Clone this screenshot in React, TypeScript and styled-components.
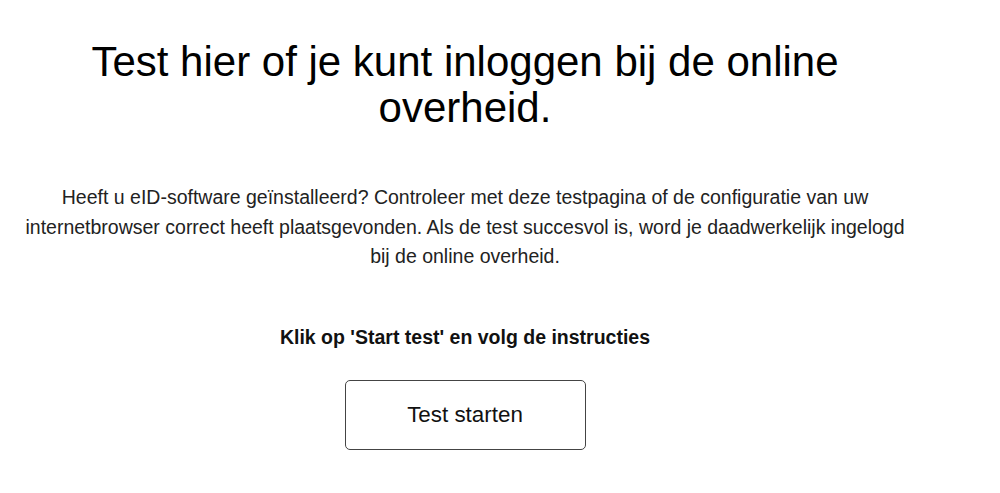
import React from "react";
import styled, { createGlobalStyle } from "styled-components";

const Global = createGlobalStyle`
  body {
    margin: 8px;
    background: #ffffff;
    font-family: "Liberation Sans", Arial, sans-serif;
    color: #000;
  }
`;

const Page = styled.main`
  width: 914px;
  display: flex;
  flex-direction: column;
  align-items: center;
  text-align: center;
  padding-top: 31px;
`;

const Title = styled.h1`
  margin: 0;
  font-size: 42px;
  line-height: 46px;
  font-weight: 400;
  color: #000;
  width: 800px;
`;

const Intro = styled.p`
  margin: 52px 0 0;
  max-width: 892px;
  font-size: 19.5px;
  line-height: 29.5px;
  color: #222;
`;

const Instruction = styled.p`
  margin: 54px 0 0;
  font-size: 19.5px;
  font-weight: 700;
  color: #111;
`;

const StartButton = styled.button`
  margin-top: 31px;
  width: 241px;
  height: 70px;
  background: #fff;
  border: 1px solid #444;
  border-radius: 5px;
  font-family: "Liberation Sans", Arial, sans-serif;
  font-size: 22.4px;
  color: #111;
  cursor: pointer;
`;

export default function App() {
  return (
    <>
      <Global />
      <Page>
        <Title>Test hier of je kunt inloggen bij de online overheid.</Title>
        <Intro>
          Heeft u eID-software geïnstalleerd? Controleer met deze testpagina of de configuratie van uw
          internetbrowser correct heeft plaatsgevonden. Als de test succesvol is, word je daadwerkelijk
          ingelogd bij de online overheid.
        </Intro>
        <Instruction>Klik op 'Start test' en volg de instructies</Instruction>
        <StartButton>Test starten</StartButton>
      </Page>
    </>
  );
}
